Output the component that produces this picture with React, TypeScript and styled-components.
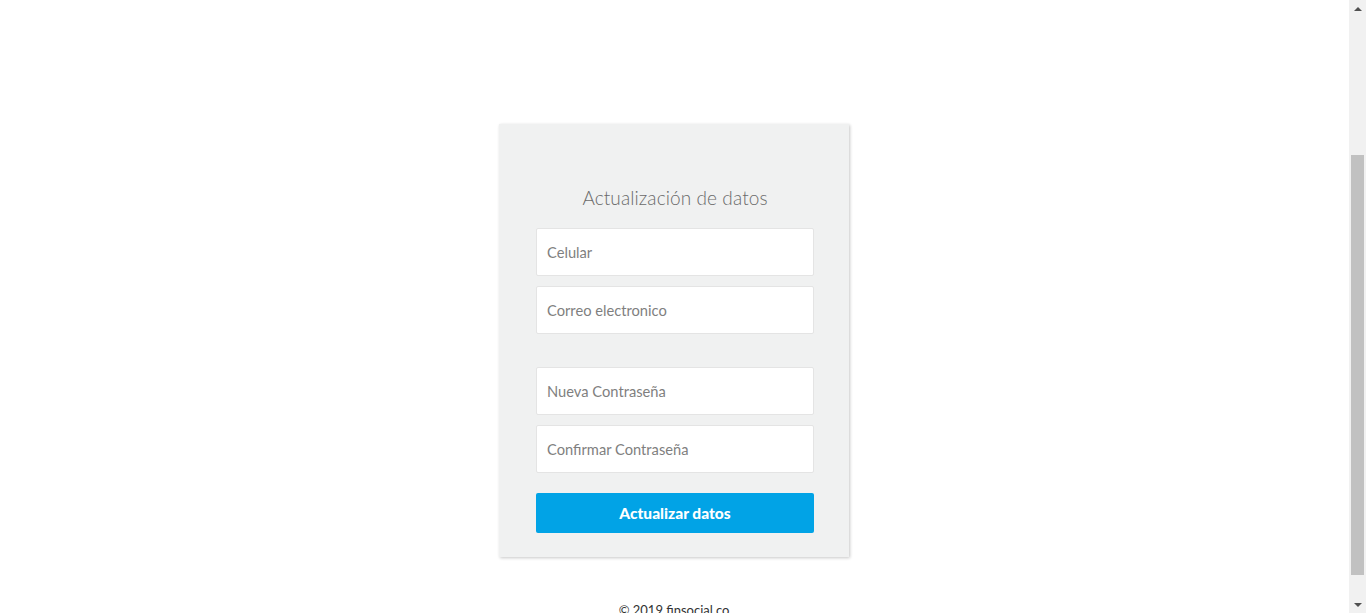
import React, { useLayoutEffect } from 'react'
import styled, { createGlobalStyle } from 'styled-components'

const GlobalStyle = createGlobalStyle`
  html, body {
    margin: 0;
    padding: 0;
    background: #ffffff;
    font-family: Lato, "Open Sans", Arial, sans-serif;
  }
  * {
    box-sizing: border-box;
  }
`

const Page = styled.div`
  display: flex;
  flex-direction: column;
  align-items: center;
  padding: 324px 18px 0 0;
  min-height: 843px;
`

// the browser's classic scrollbar, drawn since the headless shot hides it
const ScrollTrack = styled.div`
  position: fixed;
  top: 0;
  right: 0;
  width: 17px;
  height: 100vh;
  background: #f1f1f1;
  display: flex;
  flex-direction: column;
  align-items: center;
  justify-content: space-between;
`

const ArrowButton = styled.div<{ $down?: boolean }>`
  width: 17px;
  height: 17px;
  display: flex;
  align-items: center;
  justify-content: center;

  &::after {
    content: '';
    width: 0;
    height: 0;
    border-left: 4px solid transparent;
    border-right: 4px solid transparent;
    ${(p) => (p.$down ? 'border-top: 4px solid #505050;' : 'border-bottom: 4px solid #505050;')}
  }
`

const Thumb = styled.div`
  position: absolute;
  left: 2px;
  width: 13px;
  background: #c1c1c1;
`

const Card = styled.form`
  width: 350px;
  background: #f0f1f1;
  box-shadow: 1px 1px 3px rgba(0, 0, 0, 0.22);
  padding: 62px 35px 24px 37px;
  display: flex;
  flex-direction: column;
`

const Title = styled.h2`
  margin: 0 0 18px;
  font-size: 19px;
  line-height: 24px;
  font-weight: 300;
  color: #6a6a6a;
  text-align: center;
  letter-spacing: 0.1px;
`

const Field = styled.input<{ $gap?: number }>`
  width: 278px;
  height: 48px;
  margin-bottom: ${(p) => p.$gap ?? 10}px;
  padding: 0 10px;
  background: #ffffff;
  border: 1px solid #e4e4e4;
  border-radius: 2px;
  font-family: inherit;
  font-size: 14.7px;
  color: #555;
  outline: none;

  &::placeholder {
    color: #7f7f7f;
    opacity: 1;
  }
`

const Submit = styled.button`
  width: 278px;
  height: 40px;
  border: 0;
  border-radius: 2px;
  background: #01a3e6;
  color: #ffffff;
  font-family: inherit;
  font-weight: 900;
  font-size: 15.5px;
  cursor: pointer;
`

const Footer = styled.footer`
  margin-top: 45px;
  font-size: 13px;
  color: #333333;
  text-align: center;
`

const App: React.FC = () => {
  useLayoutEffect(() => {
    window.scrollTo(0, 200)
  }, [])

  return (
    <>
      <GlobalStyle />
      <Page>
        <Card onSubmit={(e) => e.preventDefault()}>
          <Title>Actualización de datos</Title>
          <Field type="text" placeholder="Celular" />
          <Field type="email" placeholder="Correo electronico" $gap={33} />
          <Field type="password" placeholder="Nueva Contraseña" />
          <Field type="password" placeholder="Confirmar Contraseña" $gap={20} />
          <Submit type="submit">Actualizar datos</Submit>
        </Card>
        <Footer>© 2019 finsocial.co</Footer>
      </Page>
      <ScrollTrack>
        <ArrowButton />
        <Thumb style={{ top: 155, height: 420 }} />
        <ArrowButton $down />
      </ScrollTrack>
    </>
  )
}

export default App
